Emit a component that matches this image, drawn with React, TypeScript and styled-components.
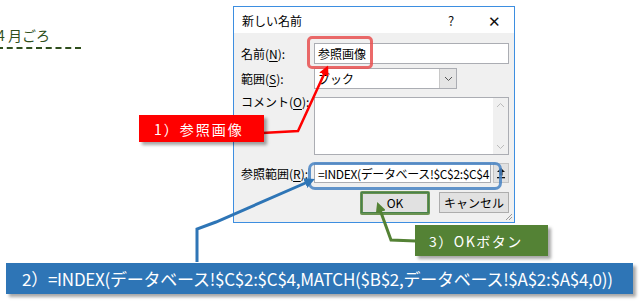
import React from "react";
import styled, { createGlobalStyle } from "styled-components";

const GlobalStyle = createGlobalStyle`
  html, body {
    margin: 0;
    padding: 0;
    background: #ffffff;
  }
  body {
    font-family: "Noto Sans CJK JP", "Noto Sans", sans-serif;
  }
`;

const UI_FONT = `"Noto Sans CJK JP", "Noto Sans", sans-serif`;

const Canvas = styled.div`
  position: relative;
  width: 639px;
  height: 302px;
  overflow: hidden;
  background: #ffffff;
`;

// heading left over from the sheet behind the dialog
const SheetHeading = styled.div`
  position: absolute;
  left: -3px;
  top: 26px;
  width: 84px;
  padding-bottom: 3px;
  color: #2f4f1c;
  font-family: ${UI_FONT};
  font-size: 14px;
  line-height: 18px;
  border-bottom: 2px dashed #2f4f1c;
`;

const Window = styled.div`
  position: absolute;
  left: 233px;
  top: 6px;
  width: 280px;
  height: 215px;
  border: 1px solid #3d8ee0;
  background: #f0f0f0;
  display: flex;
  flex-direction: column;
  font-family: ${UI_FONT};
  font-size: 12px;
  color: #000;
`;

const TitleBar = styled.div`
  height: 26px;
  background: #ffffff;
  display: flex;
  align-items: center;
  padding-left: 8px;
`;

const Title = styled.div`
  flex: 1;
`;

const TitleButton = styled.div<{ $w: number; $size: number }>`
  width: ${(p) => p.$w}px;
  text-align: center;
  font-size: ${(p) => p.$size}px;
  color: #111;
`;

const Body = styled.div`
  flex: 1;
  position: relative;
  display: flex;
  flex-direction: column;
  padding: 10px 5px 0 7px;
`;

const Row = styled.div<{ $mt: number; $top?: boolean }>`
  display: flex;
  align-items: ${(p) => (p.$top ? "flex-start" : "center")};
  margin-top: ${(p) => p.$mt}px;
`;

const Label = styled.div<{ $raise?: number }>`
  width: 73px;
  flex: none;
  white-space: nowrap;
  margin-top: ${(p) => -(p.$raise || 0)}px;
  u {
    text-decoration: underline;
    text-underline-offset: 2px;
  }
`;

const TextBox = styled.div<{ $w: number; $tight?: boolean }>`
  box-sizing: border-box;
  width: ${(p) => p.$w}px;
  height: ${(p) => (p.$tight ? 20 : 21)}px;
  background: #fff;
  border: 1px solid #abadb3;
  display: flex;
  align-items: center;
  padding-left: 3px;
  white-space: nowrap;
  overflow: hidden;
  letter-spacing: ${(p) => (p.$tight ? "-0.35px" : "0")};
`;

const Combo = styled.div`
  box-sizing: border-box;
  width: 143px;
  height: 21px;
  background: #fff;
  border: 1px solid #abadb3;
  display: flex;
  align-items: center;
`;

const ComboValue = styled.div`
  flex: 1;
  padding-left: 3px;
`;

const ComboButton = styled.div`
  width: 16px;
  height: 19px;
  background: #e5e5e5;
  border-left: 1px solid #c8c8c8;
  display: flex;
  align-items: center;
  justify-content: center;
`;

const Memo = styled.div`
  box-sizing: border-box;
  width: 195px;
  height: 58px;
  background: #fff;
  border: 1px solid #abadb3;
  display: flex;
  justify-content: flex-end;
`;

const ScrollTrack = styled.div`
  width: 15px;
  background: #f0f0f0;
  display: flex;
  flex-direction: column;
  justify-content: space-between;
  align-items: center;
  padding: 4px 0;
`;

const RefButton = styled.div`
  box-sizing: border-box;
  width: 16px;
  height: 20px;
  margin-left: 2px;
  background: #e1e1e1;
  border: 1px solid #c4c4c4;
  display: flex;
  align-items: center;
  justify-content: center;
`;

const ButtonRow = styled.div`
  display: flex;
  justify-content: flex-end;
  gap: 10px;
  margin-top: 9px;
  padding-right: 0;
`;

const PushButton = styled.div<{ $default?: boolean; $w: number }>`
  box-sizing: border-box;
  width: ${(p) => p.$w}px;
  height: 21px;
  background: #e1e1e1;
  border: 1px solid ${(p) => (p.$default ? "#0078d7" : "#adadad")};
  display: flex;
  align-items: center;
  justify-content: center;
`;

const Grip = styled.svg`
  position: absolute;
  right: 1px;
  bottom: 1px;
`;

const Highlight = styled.div<{ $color: string; $radius: number }>`
  position: absolute;
  box-sizing: border-box;
  border: 3px solid ${(p) => p.$color};
  border-radius: ${(p) => p.$radius}px;
`;

const Callout = styled.div<{ $bg: string; $size: number; $spacing: number }>`
  position: absolute;
  box-sizing: border-box;
  background: ${(p) => p.$bg};
  color: #fff;
  font-family: ${UI_FONT};
  font-size: ${(p) => p.$size}px;
  letter-spacing: ${(p) => p.$spacing}px;
  display: flex;
  align-items: center;
  white-space: nowrap;
  box-shadow: 3px 3px 3px rgba(0, 0, 0, 0.35);
`;

const Arrows = styled.svg`
  position: absolute;
  left: 0;
  top: 0;
  pointer-events: none;
`;

const Chevron: React.FC<{ up?: boolean; color?: string }> = ({ up, color = "#666" }) => (
  <svg width="9" height="6" viewBox="0 0 9 6">
    <path
      d={up ? "M1 5 L4.5 1.5 L8 5" : "M1 1 L4.5 4.5 L8 1"}
      fill="none"
      stroke={color}
      strokeWidth="1"
    />
  </svg>
);

const App: React.FC = () => {
  return (
    <Canvas>
      <GlobalStyle />
      <SheetHeading>4 月ごろ</SheetHeading>

      <Window>
        <TitleBar>
          <Title>新しい名前</Title>
          <TitleButton $w={46} $size={13}>?</TitleButton>
          <TitleButton $w={40} $size={15}>✕</TitleButton>
        </TitleBar>
        <Body>
          <Row $mt={0}>
            <Label>
              名前(<u>N</u>):
            </Label>
            <TextBox $w={195}>参照画像</TextBox>
          </Row>

          <Row $mt={4}>
            <Label>
              範囲(<u>S</u>):
            </Label>
            <Combo>
              <ComboValue>ブック</ComboValue>
              <ComboButton>
                <Chevron color="#555" />
              </ComboButton>
            </Combo>
          </Row>

          <Row $mt={8} $top>
            <Label $raise={4}>
              コメント(<u>O</u>):
            </Label>
            <Memo>
              <ScrollTrack>
                <Chevron up color="#bbb" />
                <Chevron color="#bbb" />
              </ScrollTrack>
            </Memo>
          </Row>

          <Row $mt={8}>
            <Label>
              参照範囲(<u>R</u>):
            </Label>
            <TextBox $w={177} $tight>=INDEX(データベース!$C$2:$C$4</TextBox>
            <RefButton>
              <svg width="10" height="12" viewBox="0 0 10 12">
                <path d="M5 1 L9 5 L6.5 5 L6.5 8.5 L3.5 8.5 L3.5 5 L1 5 Z" fill="#111" />
                <rect x="1" y="10" width="8" height="1.3" fill="#111" />
              </svg>
            </RefButton>
          </Row>

          <ButtonRow>
            <PushButton $default $w={68}>OK</PushButton>
            <PushButton $w={70}>キャンセル</PushButton>
          </ButtonRow>

          <Grip width="10" height="10" viewBox="0 0 10 10">
            <path d="M9 3 L3 9 M9 6 L6 9" stroke="#9a9a9a" strokeWidth="1" />
          </Grip>
        </Body>
      </Window>

      <Highlight $color="rgba(232, 80, 80, 0.85)" $radius={5} style={{ left: 307, top: 36, width: 66, height: 33 }} />
      <Highlight $color="rgba(70, 130, 195, 0.85)" $radius={7} style={{ left: 308, top: 162, width: 194, height: 28 }} />
      <Highlight $color="rgba(84, 130, 53, 0.85)" $radius={2} style={{ left: 360, top: 191, width: 70, height: 24 }} />

      <Arrows width="639" height="302" viewBox="0 0 639 302">
        <defs>
          <marker id="headRed" viewBox="0 0 10 10" refX="5" refY="5" markerWidth="4" markerHeight="4" orient="auto">
            <path d="M0 0 L10 5 L0 10 Z" fill="#ff0000" />
          </marker>
          <marker id="headBlue" viewBox="0 0 10 10" refX="5" refY="5" markerWidth="3.5" markerHeight="3.5" orient="auto">
            <path d="M0 0 L10 5 L0 10 Z" fill="#2e75b6" />
          </marker>
          <marker id="headGreen" viewBox="0 0 10 10" refX="5" refY="5" markerWidth="3.5" markerHeight="3.5" orient="auto">
            <path d="M0 0 L10 5 L0 10 Z" fill="#548235" />
          </marker>
        </defs>
        <polyline points="262,133 298,131 326,70" fill="none" stroke="#ff0000" strokeWidth="2.5" markerEnd="url(#headRed)" />
        <polyline points="197,262 197,229 216,222 310,181" fill="none" stroke="#2e75b6" strokeWidth="3" markerEnd="url(#headBlue)" />
        <polyline points="416,241 391,240 379,207" fill="none" stroke="#548235" strokeWidth="3" markerEnd="url(#headGreen)" />
      </Arrows>

      <Callout $bg="#ff0000" $size={14} $spacing={2} style={{ left: 139, top: 115, width: 125, height: 27, paddingLeft: 15 }}>
        1）参照画像
      </Callout>
      <Callout $bg="#548235" $size={14} $spacing={1.5} style={{ left: 415, top: 225, width: 133, height: 31, paddingLeft: 14 }}>
        3）OKボタン
      </Callout>
      <Callout $bg="#2e75b6" $size={17} $spacing={-0.25} style={{ left: 6, top: 263, width: 627, height: 31, paddingLeft: 16 }}>
        2）=INDEX(データベース!$C$2:$C$4,MATCH($B$2,データベース!$A$2:$A$4,0))
      </Callout>
    </Canvas>
  );
};

export default App;
